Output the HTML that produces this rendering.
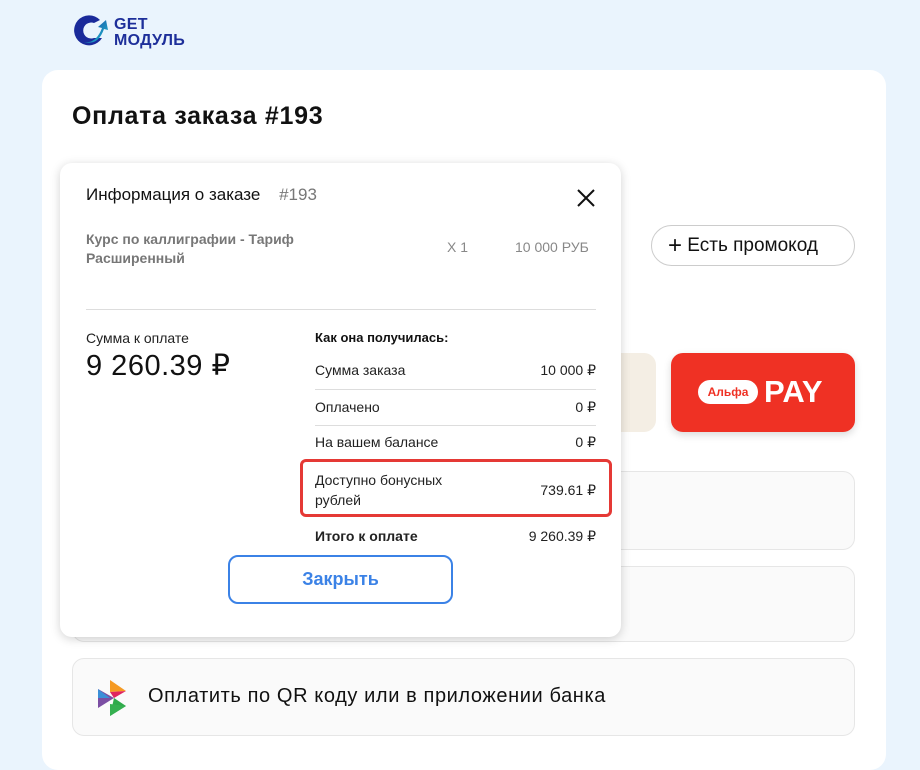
<!DOCTYPE html>
<html><head><meta charset="utf-8"><style>
*{box-sizing:border-box;margin:0;padding:0}
body{width:920px;height:756px;overflow:hidden;background:#eaf4fd;font-family:"Liberation Sans","DejaVu Sans",sans-serif;color:#111;position:relative}
.a{position:absolute}
.card{left:42px;top:70px;width:844px;height:700px;background:#fff;border-radius:16px}
.grey{background:#fafafa;border:1px solid #e6e6e6;border-radius:12px}
.modal{left:60px;top:163px;width:561px;height:474px;background:#fff;border-radius:12px;box-shadow:0 2px 10px rgba(0,0,0,.18)}
.row{position:absolute;left:315px;width:281px;font-size:14px;display:flex;justify-content:space-between;color:#222}
.hr{position:absolute;height:1px;background:#ddd}
</style></head><body>
<svg class="a" style="left:70px;top:12px" width="40" height="38" viewBox="0 0 40 38">
<defs><linearGradient id="g" x1="0" y1="0" x2="1" y2="1"><stop offset="0" stop-color="#1a3aa0"/><stop offset="1" stop-color="#1fc0d0"/></linearGradient></defs>
<path d="M30 8 A15 15 0 1 0 32 26 L24 26 A8 8 0 1 1 24 11 Z" fill="#1a2a9a"/>
<path d="M14 30 Q26 32 32 16 L28 15 L36 8 L38 18 L34 17 Q28 34 14 30Z" fill="url(#g)"/>
</svg>
<div class="a" style="left:114px;top:17px;font-weight:bold;font-size:16px;line-height:16px;color:#1e2f9a;letter-spacing:.3px">GET<br>МОДУЛЬ</div>
<div class="a card"></div>
<div class="a" style="left:72px;top:102px;font-size:25px;font-weight:bold;letter-spacing:.7px">Оплата заказа #193</div>
<div class="a" style="left:651px;top:225px;width:204px;height:41px;border:1px solid #ccc;border-radius:21px;font-size:19px;line-height:39px;padding-left:16px"><span style="font-size:24px;vertical-align:-2px">+</span> Есть промокод</div>
<div class="a" style="left:600px;top:353px;width:56px;height:79px;background:#f4eee4;border-radius:12px"></div>
<div class="a" style="left:671px;top:353px;width:184px;height:79px;background:#ef3124;border-radius:12px;box-shadow:0 3px 8px rgba(0,0,0,.15)">
<div class="a" style="left:27px;top:27px;width:60px;height:24px;background:#fff;border-radius:12px;color:#ef3124;font-size:12px;font-weight:bold;text-align:center;line-height:24px">Альфа</div>
<div class="a" style="left:93px;top:21px;color:#fff;font-size:31px;font-weight:bold">PAY</div></div>
<div class="a grey" style="left:72px;top:471px;width:783px;height:79px"></div>
<div class="a grey" style="left:72px;top:566px;width:783px;height:76px"></div>
<div class="a grey" style="left:72px;top:658px;width:783px;height:78px"></div>
<svg class="a" style="left:97px;top:680px" width="32" height="36" viewBox="0 0 32 36">
<path d="M13 0 L13 12 L29 11Z" fill="#f59a23"/><path d="M13 12 L29 11 L17 18Z" fill="#e0245e"/>
<path d="M1 9 L17 18 L1 28Z" fill="#7b4ea3"/><path d="M1 9 L13 18 L1 18Z" fill="#3b8fd8"/>
<path d="M17 18 L29 26 L13 36Z" fill="#2eaa4a"/><path d="M13 24 L29 26 L13 36Z" fill="#35b050"/>
</svg>
<div class="a" style="left:148px;top:685px;font-size:20px;letter-spacing:.6px">Оплатить по QR коду или в приложении банка</div>

<div class="a modal">
<div class="a" style="left:26px;top:22px;font-size:17px">Информация о заказе <span style="color:#777;margin-left:14px">#193</span></div>
<svg class="a" style="left:517px;top:26px" width="18" height="18" viewBox="0 0 18 18"><path d="M1 1L17 17M17 1L1 17" stroke="#111" stroke-width="2"/></svg>
<div class="a" style="left:26px;top:67px;font-size:14px;font-weight:bold;color:#777;line-height:19px">Курс по каллиграфии - Тариф<br>Расширенный</div>
<div class="a" style="left:387px;top:76px;font-size:14px;color:#888">X 1</div>
<div class="a" style="left:455px;top:76px;font-size:14px;color:#888">10 000 РУБ</div>
<div class="hr" style="left:26px;top:146px;width:510px"></div>
<div class="a" style="left:26px;top:167px;font-size:14px;color:#222">Сумма к оплате</div>
<div class="a" style="left:26px;top:185px;font-size:29px;color:#111;letter-spacing:.5px">9 260.39 ₽</div>
</div>
<div class="a" style="left:315px;top:330px;font-size:13px;font-weight:bold">Как она получилась:</div>
<div class="row" style="top:362px"><span>Сумма заказа</span><span>10 000 ₽</span></div>
<div class="hr" style="left:315px;top:389px;width:281px"></div>
<div class="row" style="top:399px"><span>Оплачено</span><span>0 ₽</span></div>
<div class="hr" style="left:315px;top:425px;width:281px"></div>
<div class="row" style="top:434px"><span>На вашем балансе</span><span>0 ₽</span></div>
<div class="a" style="left:300px;top:459px;width:312px;height:58px;border:3px solid #e53935;border-radius:6px"></div>
<div class="row" style="top:470px;line-height:20px;align-items:center"><span>Доступно бонусных<br>рублей</span><span>739.61 ₽</span></div>
<div class="row" style="top:528px"><b>Итого к оплате</b><span>9 260.39 ₽</span></div>
<div class="a" style="left:228px;top:555px;width:225px;height:49px;border:2px solid #3b82e6;border-radius:10px;color:#3b82e6;font-weight:bold;font-size:18px;text-align:center;line-height:45px">Закрыть</div>
</body></html>
